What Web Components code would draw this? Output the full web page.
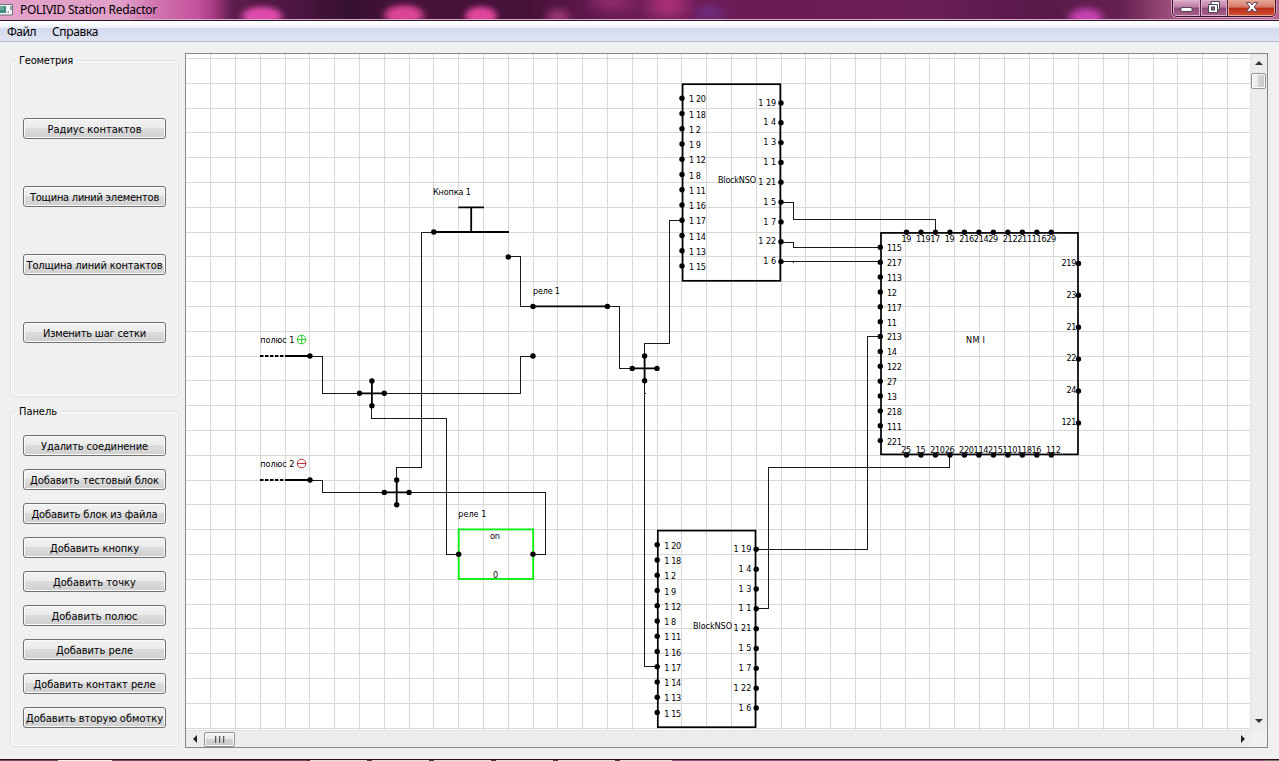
<!DOCTYPE html>
<html lang="ru">
<head>
<meta charset="utf-8">
<title>POLIVID Station Redactor</title>
<style>
html,body{margin:0;height:100%;overflow:hidden}
body{background:#f0f0f0;color:#000}
</style>
</head>
<body>
<station-app></station-app>
<script>
const UI = '"DejaVu Sans Condensed","DejaVu Sans",sans-serif';
const SYS = '"Noto Sans","Open Sans",sans-serif';

function define(name, html, after) {
  const t = document.createElement('template');
  t.innerHTML = html;
  customElements.define(name, class extends HTMLElement {
    connectedCallback() {
      if (this.shadowRoot) return;
      this.attachShadow({mode: 'open'}).append(t.content.cloneNode(true));
      if (after) after.call(this, this.shadowRoot);
    }
  });
}

/* A single line whose tracking is set so that it takes the width in "w". */
define('fit-text', `<style>:host{display:inline-block;white-space:nowrap}span{display:inline-block}</style><span><slot></slot></span>`, function (r) {
  const s = r.querySelector('span'), n = this.textContent.length, w = +this.getAttribute('w');
  s.style.letterSpacing = ((w - s.getBoundingClientRect().width) / n).toFixed(3) + 'px';
});

define('title-bar', `<style>
:host{display:flex;height:21px;box-sizing:border-box;position:relative;z-index:0;overflow:hidden;font:12px/19px ${SYS};
 border-bottom:1px solid #2d1029}
:host::before{content:"";position:absolute;inset:-8px -10px;z-index:-1;filter:blur(2.5px);
 background:
 radial-gradient(ellipse 24px 11px at 272px 24px,#e04cae 65%,transparent),
 radial-gradient(ellipse 24px 12px at 414px 23px,#dc4494 60%,transparent),
 radial-gradient(ellipse 19px 11px at 491px 24px,#e0469b 65%,transparent),
 radial-gradient(ellipse 17px 12px at 568px 25px,#9b3874 20%,transparent),
 radial-gradient(ellipse 30px 14px at 622px 10px,#8c2a6a 20%,transparent),
 radial-gradient(ellipse 30px 20px at 678px 13px,#a83079 20%,transparent),
 radial-gradient(ellipse 22px 12px at 719px 21px,#6d2a78 30%,transparent),
 radial-gradient(ellipse 22px 13px at 1096px 26px,#c743b4 45%,transparent),
 linear-gradient(90deg,#e6a3cb 0,#dfa0c8 130px,#cf74ad 168px,#c4519c 208px,#a4397f 225px,#5d1d4c 242px,#4a153f 310px,#351030 360px,#471239 410px,#461138 540px,#6b1c55 630px,#6d1b56 810px,#6b1f58 930px,#571948 1050px,#64204f 1130px,#a0527f 1185px,#b76890 1299px)}
:host::after{content:"";position:absolute;left:0;right:0;top:19px;height:1px;background:#d9a9c8}
.i{width:13px;height:12px;margin:4px 7px 0 0}
.w{margin-left:auto;display:flex;width:104px;height:17px;margin-right:3px;box-sizing:border-box;border:1px solid #341427;border-top:0;border-radius:0 0 5px 5px;overflow:hidden;box-shadow:0 0 0 1px #d69abb}
.w span{display:flex;align-items:center;justify-content:center;box-sizing:border-box;background:linear-gradient(#d9aec8,#bd7ba2 45%,#8d4a75 50%,#a7618d);box-shadow:inset 0 0 0 1px #dcb0ca}
.a{width:28px;border-right:1px solid #4c2039}.b{width:27px;border-right:1px solid #4c2039}
.w .c{flex:1;background:linear-gradient(#e3a799,#d37868 45%,#b92b16 50%,#d05434);box-shadow:inset 0 0 0 1px #e8a795}
svg{display:block;position:relative;top:-1px}
.i{top:0}
</style>
<svg class="i" viewBox="0 0 13 12"><path d="M0 .5h12.500v10.500H0" fill="#f5f5f5" stroke="#6c7077"/><path d="M0 2h6v7H0z" fill="#3f8c80"/><path d="M0 2h4v4H0z" fill="#68a99b"/><path d="M7.500 8h1.500M11 2v4" stroke="#345" fill="none"/></svg>
<fit-text w="137">POLIVID Station Redactor</fit-text>
<div class="w">
<span class="a"><svg width="13" height="14"><rect x="1" y="7.500" width="11" height="4" rx="1" fill="#fff" stroke="#4a4356"/></svg></span>
<span class="b"><svg width="14" height="15"><path d="M4 1.500h8.500v8H10.500V12.500H1.500V4.500H4z" fill="#fff" stroke="#4a4356"/><path d="M4 4.500h6.500v5" fill="none" stroke="#4a4356"/><rect x="4.500" y="7" width="3" height="3" fill="#a06a8c" stroke="#4a4356"/></svg></span>
<span class="c"><svg width="14" height="14"><path d="M1.500 2.500h3.500l2 2.500 2-2.500h3.500L9.200 7l3.300 4.500H9L7 9l-2 2.500H1.500L4.800 7z" fill="#fff" stroke="#574554"/></svg></span>
</div>`);

define('menu-bar', `<style>
:host{display:flex;height:21px;box-sizing:border-box;padding-left:7px;gap:16px;font:12px/21px ${SYS};border-bottom:1px solid #b4bbcd;
background:linear-gradient(#fff 0,#f5f8fc 4px,#e9eef6 7px,#d4daec 7px,#dfe4f4 20px)}
</style><fit-text w="29">Файл</fit-text><fit-text w="46">Справка</fit-text>`);

define('push-button', `<style>
:host{display:flex;height:21px;box-sizing:border-box;border:1px solid #707070;border-radius:3px;align-items:center;justify-content:center;
box-shadow:inset 0 0 0 1px #fbfbfb;background:linear-gradient(#f2f2f2 0,#ebebeb 48%,#dcdcdc 50%,#cfcfcf 100%);font:11px/19px ${UI};padding-top:1px}
</style><slot></slot>`);

define('group-box', `<style>
:host{display:block;box-sizing:border-box;border:1px solid #d5dfe5;border-radius:4px;position:relative;box-shadow:inset 0 0 0 1px #fff;padding:var(--top) 12px 0;}
.t{position:absolute;left:5px;top:-7px;background:#f0f0f0;padding:0 3px;font:11px/14px ${UI};}
.c{display:flex;flex-direction:column;gap:var(--gap)}
</style><div class="t"><slot name="title"></slot></div><div class="c"><slot></slot></div>`);

define('scroll-bar', `<style>
:host{display:flex;background:#ececec;box-sizing:border-box;align-items:center}
:host([v]){flex-direction:column;align-items:flex-start;width:17px;border-left:1px solid #e2e2e2}
:host([h]){height:17px;border-top:1px solid #e2e2e2;width:1065px}
i{flex:none;display:flex;align-items:center;justify-content:center}
:host([v]) i{height:19px;width:15px}:host([v]) i:first-of-type{box-sizing:border-box;padding-bottom:2px}:host([h]) i{width:17px;height:16px}
.th{flex:none;box-sizing:border-box;border:1px solid #939393;border-radius:2px;display:flex;align-items:center;justify-content:center;gap:2px;box-shadow:inset 0 0 0 1px #fafafa}
:host([v]) .th{width:15px;height:16px;background:linear-gradient(90deg,#f5f5f5,#e8e8ea 48%,#d3d3d6 50%,#c9c9cd)}
:host([h]) .th{margin-left:1px;width:31px;height:15px;background:linear-gradient(#f5f5f5,#e8e8ea 48%,#d3d3d6 50%,#c9c9cd)}
:host([v]) b{display:none}b{width:2px;height:7px;background:linear-gradient(90deg,#555 1px,#bbb 1px)}
.s{flex:1}
svg{display:block}
.vv,.hh{display:none}:host([v]) .vv,:host([h]) .hh{display:block}
</style>
<i><svg class="vv" width="8" height="4"><path d="M0 4 4 0l4 4z" fill="#333"/></svg><svg class="hh" width="4" height="8"><path d="M4 0v8L0 4z" fill="#222"/></svg></i>
<div class="th"><b></b><b></b><b></b></div><div class="s"></div>
<i><svg class="vv" width="8" height="4"><path d="M0 0h8L4 4z" fill="#333"/></svg><svg class="hh" width="4" height="8"><path d="M0 0l4 4-4 4z" fill="#222"/></svg></i>`);

define('circuit-scheme', `<style>
:host{display:block;width:1064px;height:676px;background:#fff;overflow:hidden}
svg{display:block}
text{font:9px ${UI};fill:#000}
.g{stroke:#d8d8d8;fill:none;shape-rendering:crispEdges}
.w{stroke:#1b1b1b;fill:none;shape-rendering:crispEdges}
.k{stroke:#000;stroke-width:1.8;fill:none}
</style><svg width="1064" height="676" viewBox="186 54 1064 676"></svg>`, function (r) {
  const o = [];
  const line = (c, d) => o.push(`<path class="${c}" d="${d}"/>`);
  const dot = (x, y) => o.push(`<circle cx="${x}" cy="${y}" r="2.7"/>`);
  const text = (x, y, s, w) => o.push(`<text x="${x}" y="${y}" textLength="${w}">${s}</text>`);
  let g = '';
  for (let k = 1; k < 43; k++) g += `M${Math.floor(185.9 + 24.8 * k) + .5} 54V730`;
  for (let k = 0; k < 28; k++) g += `M186 ${Math.floor(58.45 + 24.8 * k) + .5}H1250`;
  line('g', g);

  line('w', 'M433 232.5H421.5V467.500H396.500V480M508 256.500H520.500V306.500H533M607 306.500H619.500V368.500H632' +
    'M644.500 356V343.500H669.500V220.500H682M644.500 381V666.500H657M644 393.500H646M533 356.500H520.500V393.500H384' +
    'M371.500 405V418.500H446.500V554.500H458M310 356.500H322.500V393.500H360M310 480.500H322.500V492.500H384' +
    'M409 492.500H545.500V554.500H533M781 202.500H793.500V219.500H935.500V232M781 242.500H793.500V247.500H880M781 261.500H880M793.500 261V263' +
    'M880 336.500H867.500V549.500H756M949.500 455V467.500H768.500V608.500H756');

  line('k', 'M433.500 232H509M458.300 207.300H484M471.200 207V232M533 306.300H607.500M285 356H310M285 480H310');
  o.push('<path class="k" stroke-dasharray="3.500 1.500" d="M260 356H285M260 480H285"/>');
  [[433.8,232],[508.3,256.9],[533,306.4],[607.4,306.4],[533,356],[310,356],[310,480]].forEach(p => dot(...p));
  [[644.6,368.4],[371.9,393.3],[396.7,492.4]].forEach(([x, y]) => {
    line('k', `M${x - 12.4} ${y}h24.8M${x} ${y - 12.4}v24.8`);
    dot(x - 12.4, y); dot(x + 12.4, y); dot(x, y - 12.4); dot(x, y + 12.4);
  });
  text(433, 195, 'Кнопка 1', 38); text(533, 294, 'реле 1', 27);
  text(260.300, 343, 'полюс 1', 34); text(260.300, 467, 'полюс 2', 34);
  text(458.300, 517, 'реле 1', 28);
  o.push('<path d="M297.300 339.500h8.600M301.600 335.200v8.600M305.900 339.500a4.300 4.300 0 1 1-8.600 0a4.300 4.300 0 1 1 8.600 0" fill="none" stroke="#2fd02f"/>');
  o.push('<path d="M297.300 463.500h8.600M305.900 463.500a4.300 4.300 0 1 1-8.600 0a4.300 4.300 0 1 1 8.600 0" fill="none" stroke="#c03038"/>');
  o.push('<rect x="458.700" y="529.400" width="74.500" height="49.600" fill="none" stroke="#00ee08" stroke-width="1.800"/>');
  dot(458.7, 554.2); dot(533, 554.2);
  text(490, 539, 'on', 10); text(493, 577.7, '0', 5.2);

  const block = (x, y, nx, nw) => {
    o.push(`<rect x="${x}" y="${y}" width="97.700" height="196.600" fill="none" stroke="#000" stroke-width="1.700"/>`);
    ['1 20','1 18','1 2','1 9','1 12','1 8','1 11','1 16','1 17','1 14','1 13','1 15'].forEach((s, i) => {
      const cy = y + 14.1 + 15.25 * i;
      dot(x - .6, cy); text(x + 6.4, Math.floor(cy + 4.6), s, s.length > 3 ? 17 : 12);
    });
    ['1 19','1 4','1 3','1 1','1 21','1 5','1 7','1 22','1 6'].forEach((s, i) => {
      const cy = y + 18.7 + 19.84 * i, w = s.length > 3 ? 18 : 13;
      dot(x + 98.4, cy); text(x + 93.6 - w, Math.floor(cy + 3.1), s, w);
    });
    text(nx, y + 98.8, 'BlockNSO', nw);
  };
  block(682.6, 84.2, 718, 38);
  block(657.8, 530.6, 693, 39);

  o.push('<rect x="881" y="232.900" width="197" height="221.500" fill="none" stroke="#000" stroke-width="1.700"/>');
  const W = s => s.length * 4.95;
  ['115','217','113','12','117','11','213','14','122','27','13','218','111','221'].forEach((s, i) => {
    const cy = 247.3 + 14.87 * i; dot(880.3, cy); text(887, Math.floor(cy + 4.4), s, W(s));
  });
  ['219','23','21','22','24','121'].forEach((s, i) => {
    const cy = 263.4 + 31.9 * i; dot(1078.5, cy); text(1076.3 - W(s), Math.floor(cy + 2.8), s, W(s));
  });
  const top = ['19','119','17','19','216','214','29','212','211','116','29'];
  const bot = ['25','15','210','26','220','114','215','110','118','16','112'];
  for (let i = 0; i < 11; i++) {
    const x = 906.5 + 14.48 * i;
    dot(x, 232.2); dot(x, 455);
    text(x - 5.1, 241.800, top[i], W(top[i])); text(x - 5.3, 453, bot[i], W(bot[i]));
  }
  text(966, 343, 'NM I', 19);
  r.querySelector('svg').innerHTML = o.join('');
});

define('scheme-view', `<style>
:host{display:grid;grid-template-columns:1064px 17px;grid-template-rows:676px 17px;box-sizing:border-box;width:1083px;height:695px;border:1px solid #828790;background:#f0f0f0}
</style><circuit-scheme></circuit-scheme><scroll-bar v></scroll-bar><scroll-bar h></scroll-bar>`);

define('task-edge', `<style>
:host{display:block;height:2px;box-sizing:border-box;border-top:1px solid #2a0b22;background:linear-gradient(90deg,#7a5068 58px,#eee 58px 112px,#7a5068 112px 307px,transparent 307px 672px,#8a5878 672px 1264px,#777 1264px),repeating-linear-gradient(90deg,#ddd 0 57px,#533 57px 62px)}
</style>`);

const btn = (w, s) => `<push-button><fit-text w="${w}">${s}</fit-text></push-button>`;
define('station-app', `<style>
:host{display:flex;flex-direction:column;width:1279px;height:761px;background:#f0f0f0;overflow:hidden}
main{flex:1;display:flex;padding:11px 0 0 10px;box-sizing:border-box}
aside{width:169px;margin-right:6px;padding-top:7px;display:flex;flex-direction:column;gap:14px}
.g{height:337px;--top:57px;--gap:47px}.p{height:336px;--top:23px;--gap:13px}
</style>
<title-bar></title-bar><menu-bar></menu-bar>
<main><aside>
<group-box class="g"><fit-text slot="title" w="54">Геометрия</fit-text>
${btn(94, 'Радиус контактов')}${btn(129, 'Тощина линий элементов')}${btn(136, 'Толщина линий контактов')}${btn(103, 'Изменить шаг сетки')}</group-box>
<group-box class="p"><fit-text slot="title" w="38">Панель</fit-text>
${btn(107, 'Удалить соединение')}${btn(129, 'Добавить тестовый блок')}${btn(126, 'Добавить блок из файла')}${btn(89, 'Добавить кнопку')}${btn(83, 'Добавить точку')}${btn(86, 'Добавить полюс')}${btn(77, 'Добавить реле')}${btn(122, 'Добавить контакт реле')}${btn(137, 'Добавить вторую обмотку')}</group-box>
</aside><scheme-view></scheme-view></main>
<task-edge></task-edge>`);
</script>
</body>
</html>
